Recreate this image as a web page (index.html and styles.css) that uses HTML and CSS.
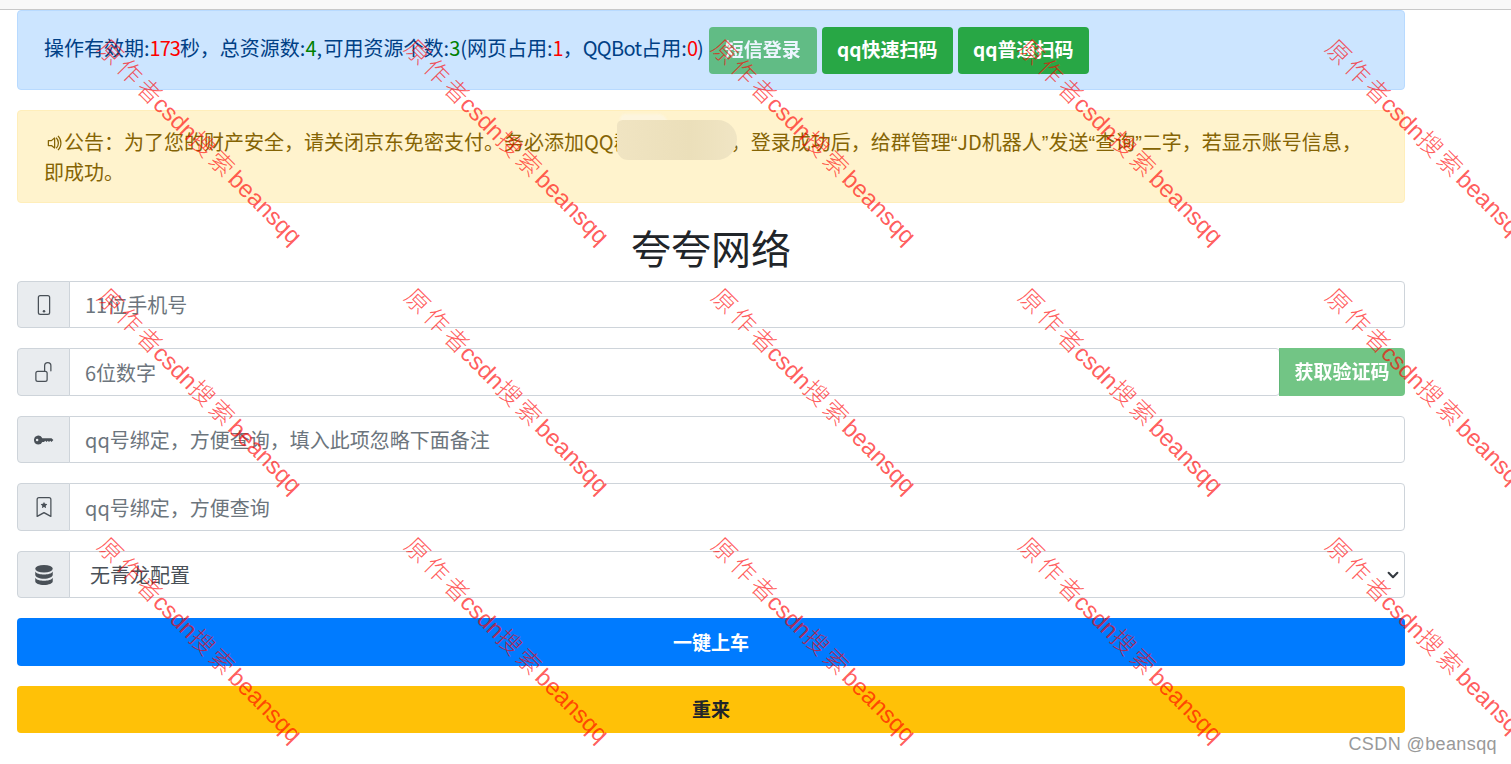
FILE: index.html
```html
<!DOCTYPE html>
<html>

<head>
    <title>夸夸网络</title>
    <link rel="stylesheet" href="styles.css">
</head>

<body>
    <div class="top-strip"></div>
    <div class="container">
        <div class="alert alert-info">
            <span class="info-text">操作有效期:<span class="red">173</span>秒，总资源数:<span class="green">4</span>, 可用资源个数:<span class="green">3</span>(网页占用:<span class="red">1</span>，<span class="latin">QQBot</span>占用:<span class="red">0</span>)</span>
            <button class="btn btn-tab btn-off">短信登录</button>
            <button class="btn btn-tab btn-qq">qq快速扫码</button>
            <button class="btn btn-tab btn-qq">qq普通扫码</button>
        </div>

        <div class="alert alert-notice">
            <svg class="icon-small" viewBox="0 0 16 16" fill="currentColor">
                <path d="M9 4a.5.5 0 0 0-.812-.39L5.825 5.5H3.5A.5.5 0 0 0 3 6v4a.5.5 0 0 0 .5.5h2.325l2.363 1.89A.5.5 0 0 0 9 12V4zM6.312 6.39 8 5.04v5.92L6.312 9.61A.5.5 0 0 0 6 9.5H4v-3h2a.5.5 0 0 0 .312-.11z" />
                <path d="M11.536 14.01A8.473 8.473 0 0 0 14.026 8a8.473 8.473 0 0 0-2.49-6.01l-.708.707A7.476 7.476 0 0 1 13.025 8c0 2.071-.84 3.946-2.197 5.303l.708.707z" />
                <path d="M10.121 12.596A6.48 6.48 0 0 0 12.025 8a6.48 6.48 0 0 0-1.904-4.596l-.707.707A5.483 5.483 0 0 1 11.025 8a5.483 5.483 0 0 1-1.61 3.89l.706.706z" />
            </svg>公告：为了您的财产安全，请关闭京东免密支付。务必添加QQ群<span class="smudge"></span>，登录成功后，给群管理<span class="quote">“</span>JD机器人<span class="quote">”</span>发送<span class="quote">“</span>查询<span class="quote">”</span>二字，若显示账号信息，即成功。
        </div>

        <h1 class="title">夸夸网络</h1>

        <div class="input-group">
            <span class="addon">
                <svg class="icon" viewBox="0 0 16 16" fill="currentColor">
                    <path d="M11 1a1 1 0 0 1 1 1v12a1 1 0 0 1-1 1H5a1 1 0 0 1-1-1V2a1 1 0 0 1 1-1h6zM5 0a2 2 0 0 0-2 2v12a2 2 0 0 0 2 2h6a2 2 0 0 0 2-2V2a2 2 0 0 0-2-2H5z" />
                    <path d="M8 14a1 1 0 1 0 0-2 1 1 0 0 0 0 2z" />
                </svg>
            </span>
            <input class="field" type="text" placeholder="11位手机号">
        </div>

        <div class="input-group tall">
            <span class="addon">
                <svg class="icon" viewBox="0 0 16 16" fill="currentColor">
                    <path d="M11 1a2 2 0 0 0-2 2v4a2 2 0 0 1 2 2v5a2 2 0 0 1-2 2H3a2 2 0 0 1-2-2V9a2 2 0 0 1 2-2h5V3a3 3 0 0 1 6 0v4a.5.5 0 0 1-1 0V3a2 2 0 0 0-2-2zM3 8a1 1 0 0 0-1 1v5a1 1 0 0 0 1 1h6a1 1 0 0 0 1-1V9a1 1 0 0 0-1-1H3z" />
                </svg>
            </span>
            <input class="field" type="text" placeholder="6位数字">
            <button class="btn btn-code">获取验证码</button>
        </div>

        <div class="input-group">
            <span class="addon">
                <svg class="icon" viewBox="0 0 16 16" fill="currentColor">
                    <path d="M3.5 11.5a3.5 3.5 0 1 1 3.163-5H14L15.5 8 14 9.5l-1-1-1 1-1-1-1 1-1-1-1 1H6.663a3.5 3.5 0 0 1-3.163 2zM2.5 9a1 1 0 1 0 0-2 1 1 0 0 0 0 2z" />
                </svg>
            </span>
            <input class="field" type="text" placeholder="qq号绑定，方便查询，填入此项忽略下面备注">
        </div>

        <div class="input-group tall">
            <span class="addon">
                <svg class="icon" viewBox="0 0 16 16" fill="currentColor">
                    <path d="M7.84 4.1a.178.178 0 0 1 .32 0l.634 1.285a.178.178 0 0 0 .134.098l1.42.206c.145.021.204.2.098.303L9.42 6.993a.178.178 0 0 0-.051.158l.242 1.414a.178.178 0 0 1-.258.187l-1.27-.668a.178.178 0 0 0-.165 0l-1.27.668a.178.178 0 0 1-.257-.187l.242-1.414a.178.178 0 0 0-.05-.158l-1.03-1.001a.178.178 0 0 1 .098-.303l1.42-.206a.178.178 0 0 0 .134-.098L7.84 4.1z" />
                    <path d="M2 2a2 2 0 0 1 2-2h8a2 2 0 0 1 2 2v13.5a.5.5 0 0 1-.777.416L8 13.101l-5.223 2.815A.5.5 0 0 1 2 15.5V2zm2-1a1 1 0 0 0-1 1v12.566l4.723-2.482a.5.5 0 0 1 .554 0L13 14.566V2a1 1 0 0 0-1-1H4z" />
                </svg>
            </span>
            <input class="field" type="text" placeholder="qq号绑定，方便查询">
        </div>

        <div class="input-group">
            <span class="addon">
                <svg class="icon" viewBox="0 0 16 16" fill="currentColor">
                    <ellipse cx="8" cy="3" rx="7" ry="3" />
                    <path d="M1 5.2C2 7 5 7.6 8 7.6s6-.6 7-2.4v2.6C15 9.4 12 11 8 11S1 9.4 1 7.800z" />
                    <path d="M1 10.200C2 12 5 12.600 8 12.600s6-.6 7-2.400V13c0 1.600-3 3-7 3s-7-1.400-7-3z" />
                </svg>
            </span>
            <select class="field field-select">
                <option>无青龙配置</option>
            </select>
        </div>

        <button class="btn btn-wide btn-blue">一键上车</button>
        <button class="btn btn-wide btn-yellow">重来</button>
    </div>

    <div class="marks">
        <span class="mark">原 作 者csdn搜 索 beansqq</span>
        <span class="mark">原 作 者csdn搜 索 beansqq</span>
        <span class="mark">原 作 者csdn搜 索 beansqq</span>
        <span class="mark">原 作 者csdn搜 索 beansqq</span>
        <span class="mark">原 作 者csdn搜 索 beansqq</span>
        <span class="mark">原 作 者csdn搜 索 beansqq</span>
        <span class="mark">原 作 者csdn搜 索 beansqq</span>
        <span class="mark">原 作 者csdn搜 索 beansqq</span>
        <span class="mark">原 作 者csdn搜 索 beansqq</span>
        <span class="mark">原 作 者csdn搜 索 beansqq</span>
        <span class="mark">原 作 者csdn搜 索 beansqq</span>
        <span class="mark">原 作 者csdn搜 索 beansqq</span>
        <span class="mark">原 作 者csdn搜 索 beansqq</span>
        <span class="mark">原 作 者csdn搜 索 beansqq</span>
        <span class="mark">原 作 者csdn搜 索 beansqq</span>
    </div>
    <div class="csdn-tag">CSDN @beansqq</div>
</body>

</html>
```

FILE: styles.css
```css
html,
body {
    height: 100%;
    overflow: hidden;
}

body {
    margin: 0;
    background-color: #fff;
    color: #212529;
    font-family: "Noto Sans CJK SC", "Noto Sans", sans-serif;
    font-size: 20px;
}

.top-strip {
    height: 9px;
    background-color: #f8f8f8;
    border-bottom: 1px solid #c8c8c8;
}

.container {
    width: 1388px;
    margin-left: 17px;
}

.red {
    color: #f00;
    letter-spacing: -1px;
}

.green {
    color: #008000;
}

.latin {
    letter-spacing: -0.7px;
}

.alert {
    margin-bottom: 20px;
    border: 1px solid transparent;
    border-radius: 4px;
    line-height: 30px;
}

.alert-info {
    display: flex;
    align-items: center;
    height: 80px;
    box-sizing: border-box;
    padding: 0 26px;
    background-color: #cce5ff;
    border-color: #b8daff;
    color: #004085;
}

.info-text {
    margin-right: 5px;
    margin-top: -4px;
    word-spacing: -3px;
    white-space: nowrap;
}

.alert-notice {
    position: relative;
    height: 93px;
    box-sizing: border-box;
    padding: 15.5px 26px;
    background-color: #fff3cd;
    border-color: #ffeeba;
    color: #856404;
}

.icon-small {
    width: 20px;
    height: 20px;
    vertical-align: -3px;
}

.quote {
    font-family: "Liberation Sans", sans-serif;
    line-height: 1;
}

.smudge {
    display: inline-block;
    width: 97px;
    height: 30px;
    position: relative;
    vertical-align: top;
}

.smudge::before {
    content: "";
    position: absolute;
    left: -14px;
    top: -13px;
    width: 48px;
    height: 10px;
    background-color: #fdf5de;
    border-radius: 10px 20px 0 0;
    filter: blur(1px);
}

.smudge::after {
    content: "";
    position: absolute;
    left: -17px;
    top: -7px;
    width: 120px;
    height: 40px;
    background: linear-gradient(90deg, #f0e4c2, #ebdfba 60%, #f0e5c4);
    border-radius: 8px 28px 30px 16px;
    filter: blur(0.6px);
}

.title {
    margin: 0 0 10px;
    text-align: center;
    font-size: 40px;
    font-weight: 400;
    line-height: 48px;
}

.input-group {
    display: flex;
    height: 47px;
    margin-bottom: 20px;
}

.input-group.tall {
    height: 48px;
}

.addon {
    display: flex;
    align-items: center;
    justify-content: center;
    width: 53px;
    box-sizing: border-box;
    background-color: #e9ecef;
    border: 1px solid #ced4da;
    border-radius: 4px 0 0 4px;
    color: #495057;
}

.icon {
    width: 20px;
    height: 20px;
}

.field {
    flex: 1;
    min-width: 0;
    box-sizing: border-box;
    margin-left: -1px;
    padding: 0 15px;
    background-color: #fff;
    border: 1px solid #ced4da;
    border-radius: 0 4px 4px 0;
    color: #495057;
    font-family: inherit;
    font-size: 20px;
    outline: none;
}

.field::placeholder {
    color: #6c757d;
}

.field-select {
    padding-left: 20px;
    appearance: none;
    background-image: url("data:image/svg+xml,%3Csvg xmlns='http://www.w3.org/2000/svg' viewBox='0 0 16 16'%3E%3Cpath fill='none' stroke='%23343a40' stroke-width='2.4' stroke-linecap='round' stroke-linejoin='round' d='M3 5.500l5 5 5-5'/%3E%3C/svg%3E");
    background-repeat: no-repeat;
    background-position: right 4px center;
    background-size: 14px 14px;
}

.btn {
    border: none;
    border-radius: 4px;
    color: #fff;
    font-family: inherit;
    font-size: 19px;
    font-weight: 700;
    cursor: pointer;
}

.btn-tab {
    flex: none;
    height: 47px;
    margin-right: 5px;
    padding: 0 16px 3px;
    background-color: #28a745;
}

.btn-qq {
    width: 131px;
    padding: 0 0 3px;
}

.btn-off {
    opacity: 0.65;
}

.btn-code {
    width: 126px;
    margin-left: -1px;
    padding: 0 0 3px;
    border-radius: 0 4px 4px 0;
    background-color: #28a745;
    opacity: 0.65;
}

.btn-wide {
    display: block;
    width: 100%;
    margin-bottom: 20px;
    padding-bottom: 3px;
}

.btn-blue {
    height: 48px;
    background-color: #007bff;
}

.btn-yellow {
    height: 47px;
    background-color: #ffc107;
    color: #212529;
}

/* watermark sheet lying over the whole page */
.marks {
    position: absolute;
    left: 106px;
    top: 36px;
    display: grid;
    grid-template-columns: repeat(5, 307px);
    grid-auto-rows: 249px;
    pointer-events: none;
}

.mark {
    width: 280px;
    color: rgba(255, 0, 0, 0.65);
    font-family: "Liberation Sans", "Noto Sans CJK SC", sans-serif;
    font-size: 24px;
    font-weight: 300;
    line-height: 30px;
    word-spacing: -3px;
    white-space: nowrap;
    transform: rotate(45deg);
    transform-origin: 6px 6px;
}

.csdn-tag {
    position: absolute;
    right: 14px;
    top: 732px;
    color: #999;
    font-family: "Liberation Sans", sans-serif;
    font-size: 18px;
    line-height: 24px;
    letter-spacing: 0.4px;
}
```
